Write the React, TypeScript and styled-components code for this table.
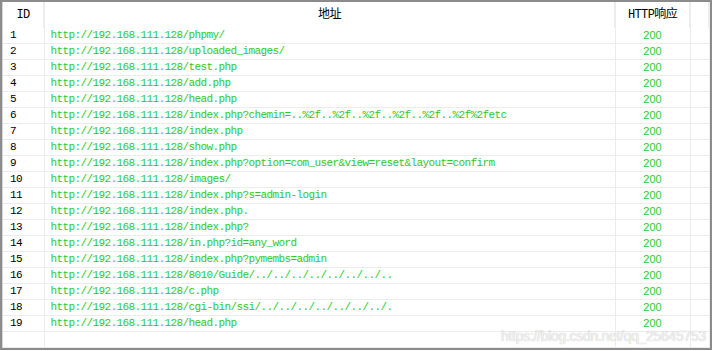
import styled, { createGlobalStyle } from "styled-components";

const rows = [
  "http://192.168.111.128/phpmy/",
  "http://192.168.111.128/uploaded_images/",
  "http://192.168.111.128/test.php",
  "http://192.168.111.128/add.php",
  "http://192.168.111.128/head.php",
  "http://192.168.111.128/index.php?chemin=..%2f..%2f..%2f..%2f..%2f..%2f%2fetc",
  "http://192.168.111.128/index.php",
  "http://192.168.111.128/show.php",
  "http://192.168.111.128/index.php?option=com_user&view=reset&layout=confirm",
  "http://192.168.111.128/images/",
  "http://192.168.111.128/index.php?s=admin-login",
  "http://192.168.111.128/index.php.",
  "http://192.168.111.128/index.php?",
  "http://192.168.111.128/in.php?id=any_word",
  "http://192.168.111.128/index.php?pymembs=admin",
  "http://192.168.111.128/8010/Guide/../../../../../../../..",
  "http://192.168.111.128/c.php",
  "http://192.168.111.128/cgi-bin/ssi/../../../../../../../.",
  "http://192.168.111.128/head.php",
];

const App = () => {
  return (
    <>
      <GlobalStyle />
      <Frame>
        <Table>
          <colgroup>
            <col style={{ width: 41 }} />
            <col style={{ width: 571 }} />
            <col style={{ width: 75 }} />
            <col />
          </colgroup>
          <thead>
            <tr>
              <HeadCell>ID</HeadCell>
              <HeadCell>地址</HeadCell>
              <HeadCell>HTTP响应</HeadCell>
              <HeadCell />
            </tr>
          </thead>
          <tbody>
            {rows.map((url, i) => (
              <tr key={i}>
                <IdCell>{i + 1}</IdCell>
                <UrlCell>{url}</UrlCell>
                <StatusCell>200</StatusCell>
                <Cell />
              </tr>
            ))}
            <tr>
              <Cell />
              <Cell />
              <Cell />
              <Cell />
            </tr>
          </tbody>
        </Table>
        <Watermark>https://blog.csdn.net/qq_25645753</Watermark>
      </Frame>
    </>
  );
};

export default App;

const GlobalStyle = createGlobalStyle`
  body {
    margin: 0;
    background: #fff;
  }
`;

const Frame = styled.div`
  position: relative;
  box-sizing: border-box;
  width: 712px;
  height: 350px;
  border: 2px solid #8b8b8b;
  box-shadow: inset 1px 0 0 #d6d6d6;
  background: #fff;
  overflow: hidden;
`;

const Table = styled.table`
  border-collapse: collapse;
  table-layout: fixed;
  width: 707px;
  margin-left: 1px;
`;

const HeadCell = styled.th`
  height: 24px;
  padding: 1px 0 1px;
  font-family: "Liberation Mono", "Noto Sans CJK SC", monospace;
  font-weight: normal;
  font-size: 12px;
  letter-spacing: -0.6px;
  color: #000;
  text-align: center;
  border-right: 2px solid #ececec;
  line-height: 24px;
`;

const Cell = styled.td`
  height: 15px;
  padding: 0;
  border-right: 1px solid #ececec;
  border-bottom: 1px solid #ececec;
  line-height: 15px;
  white-space: nowrap;
  overflow: hidden;
`;

const IdCell = styled(Cell)`
  padding-left: 7px;
  font-family: "Liberation Mono", monospace;
  font-size: 11px;
  letter-spacing: -0.6px;
  color: #000;
`;

const UrlCell = styled(Cell)`
  padding-left: 6px;
  font-family: "Liberation Mono", monospace;
  font-size: 11px;
  letter-spacing: -0.6px;
  color: #2dc82d;
`;

const StatusCell = styled(Cell)`
  text-align: center;
  font-family: "Liberation Sans", Arial, sans-serif;
  font-size: 11px;
  color: #2dc82d;
`;

const Watermark = styled.div`
  position: absolute;
  right: 4px;
  bottom: 4px;
  font-family: "Liberation Sans", Arial, sans-serif;
  font-size: 14px;
  letter-spacing: -0.3px;
  color: rgba(255, 255, 255, 0.8);
  text-shadow: 0 0 1px rgba(120, 120, 120, 0.6);
  pointer-events: none;
`;
